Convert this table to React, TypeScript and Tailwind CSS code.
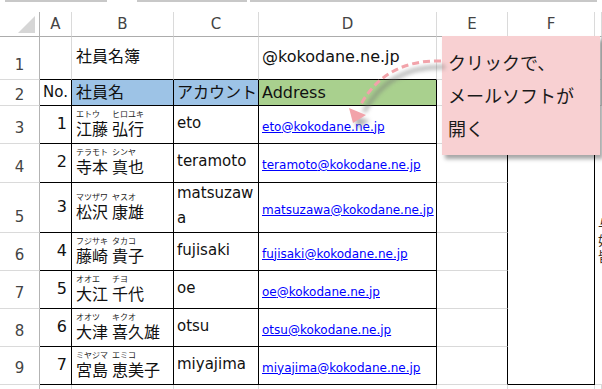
import React from 'react'

type Person = {
  no: number
  kana: [string, string]
  name: [string, string]
  acct: string
  h: string
  hp: string
}

// 社員データ
const people: Person[] = [
  { no: 1, kana: ['エトウ', 'ヒロユキ'], name: ['江藤', '弘行'], acct: 'eto', h: 'h-[38px]', hp: 'pb-[5px]' },
  { no: 2, kana: ['テラモト', 'シンヤ'], name: ['寺本', '真也'], acct: 'teramoto', h: 'h-[39px]', hp: 'pb-[5px]' },
  { no: 3, kana: ['マツザワ', 'ヤスオ'], name: ['松沢', '康雄'], acct: 'matsuzawa', h: 'h-[50px]', hp: 'pb-[5px]' },
  { no: 4, kana: ['フジサキ', 'タカコ'], name: ['藤崎', '貴子'], acct: 'fujisaki', h: 'h-[38px]', hp: 'pb-[5px]' },
  { no: 5, kana: ['オオエ', 'チヨ'], name: ['大江', '千代'], acct: 'oe', h: 'h-[38px]', hp: 'pb-[5px]' },
  { no: 6, kana: ['オオツ', 'キクオ'], name: ['大津', '喜久雄'], acct: 'otsu', h: 'h-[38px]', hp: 'pb-[5px]' },
  { no: 7, kana: ['ミヤジマ', 'エミコ'], name: ['宮島', '恵美子'], acct: 'miyajima', h: 'h-[38px]', hp: 'pb-[6px]' },
]

const cols = ['A', 'B', 'C', 'D', 'E', 'F', '']

const grid = 'border-r border-b border-[#d9d9d9]'
const rowHead = 'flex items-end justify-center border-r border-b border-r-[#b3b3b3] border-b-[#dadada] text-[15px] leading-[20px] text-[#444]'

function NameCell({ p }: { p: Person }) {
  return (
    <div className="flex items-center pl-[4px] border-r border-b border-black">
      <div className="flex gap-[4px]">
        {[0, 1].map((i) => (
          <div key={i} className="flex flex-col">
            <span className="text-[8px] leading-[10px] text-[#222] whitespace-nowrap">{p.kana[i]}</span>
            <span className="text-[16px] leading-[20px] whitespace-nowrap">{p.name[i]}</span>
          </div>
        ))}
      </div>
    </div>
  )
}

export default function App() {
  return (
    <div
      className="relative w-[602px] h-[389px] overflow-hidden bg-white text-[#111]"
      style={{ fontFamily: '"DejaVu Sans", "Noto Sans CJK JP", sans-serif' }}
    >
      {/* 上部のタブ線 */}
      <div className="flex h-[2px]">
        <div className="ml-[5px] w-[102px] bg-[#c8c8c8]" />
        <div className="ml-[30px] w-[110px] bg-[#c8c8c8]" />
        <div className="ml-[3px] w-[347px] bg-[#c8c8c8]" />
      </div>
      <div className="h-[10px]" />

      <div className="grid grid-cols-[40px_32px_102px_85px_178px_71px_87px_1fr] grid-rows-[25px_43px_26px_38px_39px_50px_38px_38px_38px_38px_38px]">
        {/* 列見出し */}
        <div className="relative border-r border-b border-r-[#b3b3b3] border-b-[#acacac]">
          <svg className="absolute left-0 top-0" width="39" height="24">
            <polygon points="18,21 35,21 35,4" fill="#d6d6d6" />
          </svg>
        </div>
        {cols.map((c, i) => (
          <div
            key={i}
            className="flex items-center justify-center border-r border-b border-r-[#dadada] border-b-[#acacac] text-[15px] text-[#444] pt-[1px]"
          >
            {c}
          </div>
        ))}

        {/* 1行目 */}
        <div className={`${rowHead} pb-[4px]`}>1</div>
        <div className="border-r border-b border-r-[#d9d9d9] border-b-black" />
        <div className="flex items-center pl-[4px] pb-[2px] border-r border-b border-r-[#d9d9d9] border-b-black text-[16px]">
          社員名簿
        </div>
        <div className="border-r border-b border-r-[#d9d9d9] border-b-black" />
        <div className="flex items-center pl-[3px] pb-[2px] border-r border-b border-r-[#d9d9d9] border-b-black text-[16px]">
          @kokodane.ne.jp
        </div>
        <div className={grid} />
        <div className={grid} />
        <div className={grid} />

        {/* 2行目 見出し */}
        <div className={`${rowHead} pb-0`}>2</div>
        <div className="flex items-center pl-[3px] border-r border-b border-black text-[15px] whitespace-nowrap">No.</div>
        <div className="flex items-center pl-[4px] border-r border-b border-black bg-[#9dc3e6] text-[16px]">社員名</div>
        <div className="flex items-center pl-[3px] border-r border-b border-black bg-[#9dc3e6] text-[16px] whitespace-nowrap">
          アカウント
        </div>
        <div className="flex items-center pl-[3px] border-r border-b border-black bg-[#a9d08e] text-[16px]">Address</div>
        <div className="border-r border-b border-r-black border-b-[#d9d9d9]" />
        <div className="col-start-7 row-start-3 row-span-8 border-r border-b border-black" />
        <div className={grid} />
        <div className="col-start-8 row-start-4 row-span-7 flex items-center pl-[3px] pb-[8px] border-b border-[#d9d9d9] overflow-hidden">
          <div className="flex flex-col text-[13px] leading-[16px] text-[#3a2a1a] whitespace-nowrap">
            <span>与</span>
            <span>如</span>
            <span>皆</span>
          </div>
        </div>

        {/* データ行 */}
        {people.map((p) => (
          <React.Fragment key={p.no}>
            <div className={`${rowHead} ${p.hp}`}>{p.no + 2}</div>
            <div className="flex items-center justify-end pr-[4px] pb-[2px] border-r border-b border-black text-[16px] leading-[20px]">
              {p.no}
            </div>
            <NameCell p={p} />
            <div className="flex items-center pl-[3px] pr-[2px] pb-[3px] border-r border-b border-black text-[15px] leading-[25px] break-all">
              {p.acct}
            </div>
            <div className="flex items-center pl-[3px] pt-[4px] border-r border-b border-black">
              <a href={`mailto:${p.acct}@kokodane.ne.jp`} className="text-[12px] text-[#0000ff] underline whitespace-nowrap">
                {p.acct}@kokodane.ne.jp
              </a>
            </div>
            <div className="border-r border-b border-r-black border-b-[#d9d9d9]" />
          </React.Fragment>
        ))}

        {/* 10行目 */}
        <div className={`${rowHead} pb-[5px]`}>10</div>
        {cols.map((_, i) => (
          <div key={i} className={grid} />
        ))}
      </div>

      {/* 吹き出し */}
      <div className="absolute left-[442px] top-[36px] w-[158px] h-[119px] bg-[#f8d0d2] shadow-[3px_4px_4px_rgba(0,0,0,0.35)] pl-[6px] pt-[10px] text-[18px] leading-[33px] text-[#1a1a1a]"
        style={{ fontFamily: '"Noto Sans CJK JP", sans-serif' }}>
        <div>クリックで、</div>
        <div>メールソフトが</div>
        <div>開く</div>
      </div>

      {/* 点線の矢印 */}
      <svg className="absolute left-0 top-0 pointer-events-none" width="602" height="389">
        <defs>
          <filter id="blur" x="-20%" y="-20%" width="140%" height="140%">
            <feGaussianBlur stdDeviation="2" />
          </filter>
        </defs>
        <g transform="translate(4,6)" filter="url(#blur)" opacity="0.55">
          <path d="M441 61 C 408 60, 378 72, 360 106" fill="none" stroke="#777" strokeWidth="4" />
          <polygon points="353,122 350,109 366,115" fill="#777" />
        </g>
        <path d="M441 61 C 408 60, 378 72, 360 106" fill="none" stroke="#f2a3aa" strokeWidth="3" strokeDasharray="7 4" />
        <polygon points="353,123 349,108 366,115" fill="#f2a3aa" />
      </svg>
    </div>
  )
}
